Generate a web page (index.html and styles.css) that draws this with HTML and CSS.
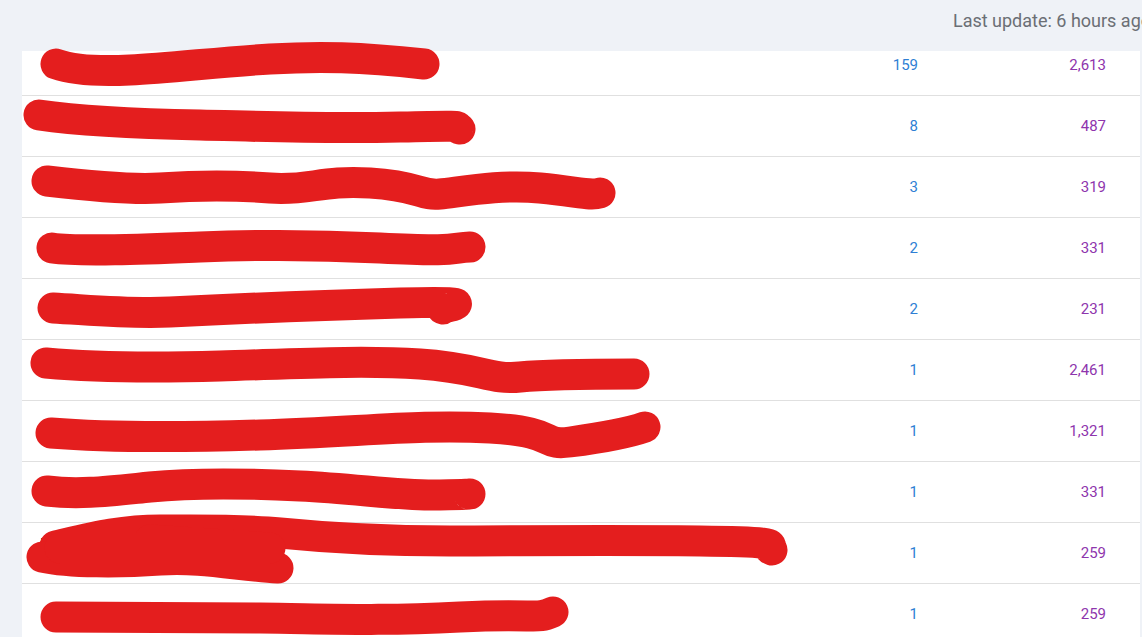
FILE: index.html
```html
<!DOCTYPE html>
<html lang="en">
<head>
<meta charset="utf-8">
<title>Pages</title>
<link rel="stylesheet" href="styles.css">
</head>
<body>
<div class="page">
  <header class="topbar">
    <span class="updated">Last update: 6 hours ago</span>
  </header>
  <div class="viewport">
    <div class="table">
      <div class="row"><div class="name">Lorem ipsum dolor sit amet consectetur adi</div><div class="num count">159</div><div class="num views">2,613</div></div>
      <div class="row"><div class="name">Lorem ipsum dolor sit amet consectetur adipisc</div><div class="num count">8</div><div class="num views">487</div></div>
      <div class="row"><div class="name">Lorem ipsum dolor sit amet consectetur adipiscing elit sed do eius y</div><div class="num count">3</div><div class="num views">319</div></div>
      <div class="row"><div class="name">Lorem ipsum dolor sit amet consectetur adipiscin</div><div class="num count">2</div><div class="num views">331</div></div>
      <div class="row"><div class="name">Lorem ipsum dolor sit amet consectetur adipi</div><div class="num count">2</div><div class="num views">231</div></div>
      <div class="row"><div class="name">Lorem ipsum dolor sit amet consectetur adipiscing elit sed d</div><div class="num count">1</div><div class="num views">2,461</div></div>
      <div class="row"><div class="name">Lorem ipsum dolor sit amet consectetur adipiscing elit sed do ei</div><div class="num count">1</div><div class="num views">1,321</div></div>
      <div class="row"><div class="name">Lorem ipsum dolor sit amet consectetur adipiscin</div><div class="num count">1</div><div class="num views">331</div></div>
      <div class="row"><div class="name two">Lorem ipsum dolor sit amet consectetur adipiscing elit sed do eiusmod tempor incidid<br>quis nostrud to a pr</div><div class="num count">1</div><div class="num views">259</div></div>
      <div class="row"><div class="name">Lorem ipsum dolor sit amet consectetur adipiscing el</div><div class="num count">1</div><div class="num views">259</div></div>
    </div>
  </div>
  <svg class="redact" width="1142" height="637" viewBox="0 0 1142 637" aria-hidden="true">
    <g fill="none" stroke="#e41e1e" stroke-width="31" stroke-linecap="round" stroke-linejoin="round">
      <path d="M56 64 C 70 69, 90 72, 130 70 S 220 62, 270 59 S 360 57, 424 64"/>
      <path d="M39 115 C 80 121, 150 124, 200 125 S 320 129, 400 127 S 450 127, 460 129"/>
      <path d="M47 181 C 90 186, 130 190, 160 188 S 230 185, 270 188 S 320 180, 370 183 S 420 196, 440 194 S 500 184, 540 188 S 590 196, 600 193"/>
      <path d="M52 248 C 80 252, 150 249, 200 247 S 300 244, 380 248 S 450 248, 470 247"/>
      <path d="M53 308 C 90 310, 130 314, 170 312 S 300 306, 400 303 S 435 308, 443 309"/>
      <path d="M46 363 C 90 367, 150 368, 220 366 S 360 360, 420 364 S 490 380, 520 377 S 600 374, 634 374"/>
      <path d="M51 433 C 100 437, 160 438, 260 435 S 420 424, 490 428 S 540 446, 570 442 S 625 434, 645 427"/>
      <path d="M47 491 C 80 495, 110 491, 150 487 S 240 483, 300 486 S 400 496, 440 495 S 465 494, 470 494"/>
      <path d="M55 546 C 90 538, 120 530, 160 530 S 240 529, 280 533 S 380 541, 450 541 S 600 540, 700 541 S 760 546, 772 550"/>
      <path d="M42 557 C 70 563, 120 563, 160 560 S 240 566, 278 568"/>
      <path d="M60 548 L 270 548 L 150 540"/>
      <path d="M56 617 C 100 617, 180 617, 260 618 S 380 621, 460 617 S 535 620, 553 612"/>
    </g>
  </svg>
</div>
</body>
</html>
```
FILE: styles.css
```css
html, body {
  margin: 0;
  padding: 0;
  height: 100%;
}
body {
  background: #eff2f7;
  font-family: Roboto, "Liberation Sans", Arial, sans-serif;
  overflow: hidden;
}
.page {
  position: relative;
  width: 1142px;
  height: 637px;
  overflow: hidden;
}
.topbar {
  height: 51px;
  display: flex;
  justify-content: flex-end;
  align-items: flex-start;
  margin-right: -9px;
}
.updated {
  padding-top: 10px;
  font-size: 18px;
  color: #6b6f75;
  white-space: nowrap;
}
.viewport {
  margin-left: 22px;
  margin-right: 2px;
  height: 586px;
  overflow: hidden;
  background: #fff;
}
.table {
  margin-top: -16px;
}
.row {
  display: grid;
  grid-template-columns: 1fr 120px 188px;
  align-items: center;
  height: 60px;
  border-bottom: 1px solid #e0e0e0;
}
.name {
  padding-left: 24px;
  font-size: 15px;
  color: #222;
  white-space: nowrap;
  overflow: hidden;
}
.name.two {
  line-height: 18px;
  padding-left: 18px;
}
.num {
  text-align: right;
  padding-right: 34px;
  font-size: 15px;
}
.count { color: #2f7fd4; }
.views { color: #8e35ad; }
.redact {
  position: absolute;
  top: 0;
  left: 0;
  pointer-events: none;
}
```
